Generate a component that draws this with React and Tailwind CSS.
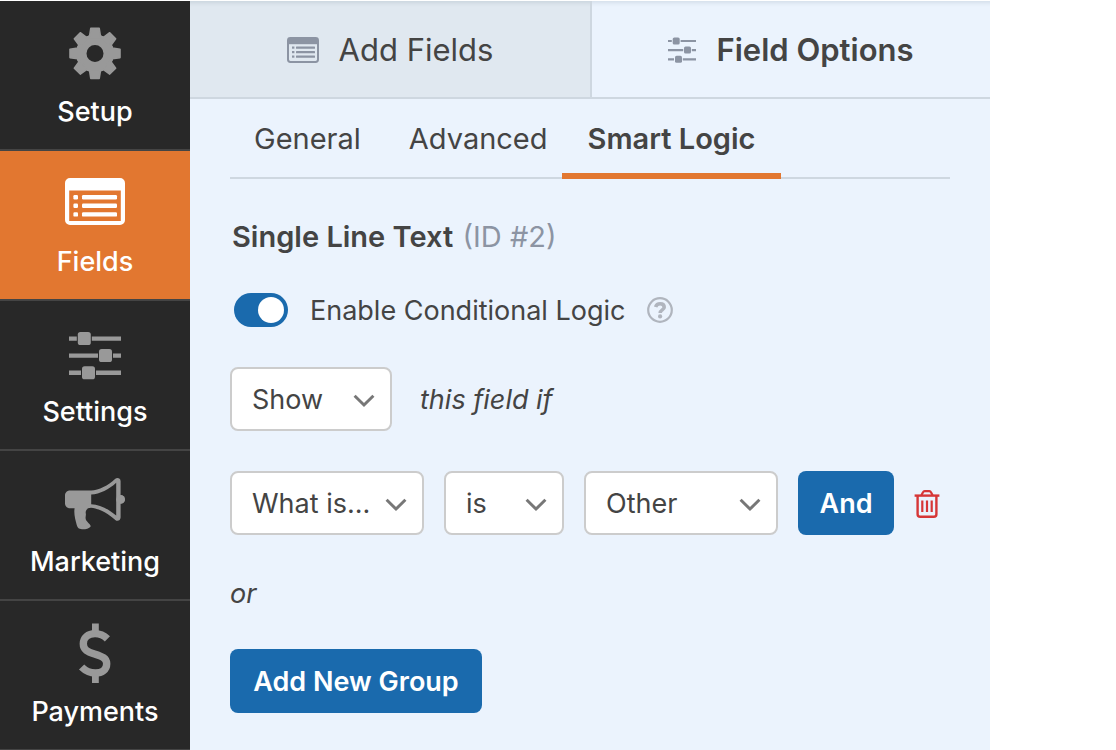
import React, { useState } from "react";

function GearIcon() {
  return (
    <svg viewBox="0 0 60 60" className="size-[60px]" aria-hidden="true">
      <circle cx="30" cy="30.4" r="13.7" fill="none" stroke="currentColor" strokeWidth="10.4" />
      {[0, 45, 90, 135, 180, 225, 270, 315].map((angle) => (
        <path
          key={angle}
          transform={`rotate(${angle} 30 30.4)`}
          d="M25.8 5.4 H34.2 L35.4 13 L38 14.4 H22 L24.6 13 Z"
          fill="currentColor"
          stroke="currentColor"
          strokeWidth="1.6"
          strokeLinejoin="round"
        />
      ))}
    </svg>
  );
}

function FormIcon() {
  return (
    <svg viewBox="0 0 60 60" className="size-[60px]" aria-hidden="true" fill="currentColor">
      <path
        fillRule="evenodd"
        d="M5 5H55A5 5 0 0 1 60 10V47A5 5 0 0 1 55 52H5A5 5 0 0 1 0 47V10A5 5 0 0 1 5 5ZM4.2 17.6V48H55.8V17.6Z"
      />
      {[22, 30.6, 39.2].map((y) => (
        <g key={y}>
          <rect x="8.4" y={y} width="4.6" height="4.4" rx="1.2" />
          <rect x="17" y={y} width="35" height="4.4" rx="1.2" />
        </g>
      ))}
    </svg>
  );
}

function SlidersIcon() {
  return (
    <svg viewBox="0 0 60 60" className="size-[60px]" aria-hidden="true" fill="currentColor">
      <path d="M4 13.4H11.8V17.8H4ZM26.8 13.4H56V17.8H26.8Z" />
      <rect x="12.8" y="9" width="13" height="13" rx="2.6" />
      <path d="M4 30.4H33V34.8H4ZM48 30.4H56V34.8H48Z" />
      <rect x="34" y="26.1" width="13" height="13" rx="2.6" />
      <path d="M4 47.6H16V52H4ZM31 47.6H56V52H31Z" />
      <rect x="17" y="43.3" width="13" height="13" rx="2.6" />
    </svg>
  );
}

function MegaphoneIcon() {
  return (
    <svg viewBox="0 0 60 60" className="size-[60px]" aria-hidden="true" fill="currentColor">
      <path
        fillRule="evenodd"
        d="M5 17.6H26C34 17.4 43 12.5 50.3 5.8C52.2 4.1 55.6 5.2 55.6 8.2V22.2A4.2 4.2 0 0 1 55.6 30.6V44.6C55.6 47.6 52.2 48.8 50.3 47C44 41 34 35.4 26 34.8C22 34.8 20.2 37.6 20.8 40.6C21.2 42.4 20.4 43.4 20.6 45.2C20.8 48.4 24.6 50 25.8 53.2C24 56 20 56.3 17 56.2C13.6 56.1 12.4 54.8 11.6 51.6C10.4 46.6 8.6 41 9.6 35.2H5C2 35.2 0 33 0 30.2V22.6C0 19.8 2 17.6 5 17.6ZM26.2 21.6V31.2C35 31.6 44 36.4 51.2 42.6V9.8C44 16.4 35 21 26.2 21.6Z"
      />
      <circle cx="55.6" cy="26.4" r="4.4" />
    </svg>
  );
}

function DollarIcon() {
  return (
    <svg viewBox="0 0 60 60" className="size-[60px]" aria-hidden="true" fill="none" stroke="currentColor">
      <path
        strokeWidth="7.4"
        d="M42.4 15.8C38.5 12 34.5 10.6 30 10.6C23 10.6 18.3 14.8 18.3 20.8C18.3 26.8 22.5 28.8 29.5 31C37 33.4 41.7 35 41.7 40.7C41.7 46.6 37 50 30.5 50C25 50 20.6 48 16.6 44"
      />
      <path strokeWidth="6.8" d="M30.4 0.4V9M30.4 52V60" />
    </svg>
  );
}

function SmallFormIcon() {
  return (
    <svg viewBox="0 0 32 26" className="h-[26px] w-8 text-[#8c94a3]" aria-hidden="true">
      <rect x="1" y="1" width="30" height="24" rx="2.4" fill="none" stroke="currentColor" strokeWidth="2" />
      <path d="M1 2H31V7.2H1Z" fill="currentColor" />
      {[10.5, 15, 19.5].map((y) => (
        <g key={y} fill="currentColor">
          <rect x="5" y={y - 1} width="2.4" height="2.2" />
          <rect x="9" y={y - 1} width="19" height="2.2" rx="0.5" />
        </g>
      ))}
    </svg>
  );
}

function SmallSlidersIcon() {
  return (
    <svg viewBox="0 0 28 26" className="h-[26px] w-7 text-[#8c94a3]" aria-hidden="true" fill="currentColor">
      <path d="M0 2.9H3.8V5.1H0ZM12.6 2.9H28V5.1H12.6Z" />
      <rect x="4.7" y="0.5" width="7" height="7" rx="1.6" />
      <path d="M0 12H15.2V14.2H0ZM23.8 12H28V14.2H23.8Z" />
      <rect x="16" y="9.6" width="7" height="7" rx="1.6" />
      <path d="M0 21.2H6V23.4H0ZM14.8 21.2H28V23.4H14.8Z" />
      <rect x="7" y="18.8" width="7" height="7" rx="1.6" />
    </svg>
  );
}

function HelpIcon() {
  return (
    <svg viewBox="0 0 26 26" className="size-[26px] text-[#b0b5be]" aria-hidden="true" fill="none" stroke="currentColor">
      <circle cx="13" cy="13" r="11.8" strokeWidth="2.2" />
      <path d="M8.6 10C9.4 7.6 10.9 6.8 13.1 6.8C15.4 6.8 17.2 8 17.2 10.2C17.2 13 13.2 12.8 13.2 16" strokeWidth="3.6" />
      <circle cx="13.1" cy="19.4" r="2.1" fill="currentColor" stroke="none" />
    </svg>
  );
}

function TrashIcon() {
  return (
    <svg viewBox="0 0 26 28" className="h-7 w-[26px]" aria-hidden="true" fill="none" stroke="currentColor" strokeWidth="2.2">
      <path d="M0.6 5.6H25.4" strokeWidth="2.4" />
      <path d="M7.4 5.2L9 2.2C9.4 1.4 9.8 1.2 10.6 1.2H15.4C16.2 1.2 16.6 1.4 17 2.2L18.6 5.2" />
      <path d="M3.6 6V24.2C3.6 26 4.6 26.8 6.2 26.8H19.8C21.4 26.8 22.4 26 22.4 24.2V6" strokeWidth="2.4" />
      <path d="M8.3 10.4V22M13 10.4V22M17.7 10.4V22" />
    </svg>
  );
}

const navItems = [
  { label: "Setup", Icon: GearIcon },
  { label: "Fields", Icon: FormIcon, active: true },
  { label: "Settings", Icon: SlidersIcon },
  { label: "Marketing", Icon: MegaphoneIcon },
  { label: "Payments", Icon: DollarIcon },
];

function Sidebar() {
  return (
    <nav className="w-[190px] shrink-0 bg-[#282828]">
      {navItems.map(({ label, Icon, active }) => (
        <a
          key={label}
          href={`#${label.toLowerCase()}`}
          aria-current={active ? "page" : undefined}
          className={`flex h-[150px] flex-col items-center gap-[10px] border-b-2 border-[#444444] pt-[22px] last:h-[149px] last:border-b ${
            active ? "bg-[#e27730] text-white" : "text-[#999999]"
          }`}
        >
          <Icon />
          <span className="text-[27px] leading-[38px] font-medium text-white">{label}</span>
        </a>
      ))}
    </nav>
  );
}

function Select({ label, options, className }) {
  return (
    <div className={`relative ${className}`}>
      <select
        aria-label={label}
        className="h-16 w-full appearance-none rounded-lg border-2 border-[#cccccc] bg-white pt-[2px] pr-10 pl-5 text-[27px] text-[#444444]"
      >
        {options.map((option) => (
          <option key={option}>{option}</option>
        ))}
      </select>
      <svg
        viewBox="0 0 22 14"
        className="pointer-events-none absolute top-[27px] right-[17px] h-[14px] w-[22px] text-[#777777]"
        aria-hidden="true"
      >
        <path d="M1.6 1.8L11 11L20.4 1.8" fill="none" stroke="currentColor" strokeWidth="3" />
      </svg>
    </div>
  );
}

function PanelTabs() {
  return (
    <div
      role="tablist"
      className="grid h-[98px] grid-cols-[201fr_199fr] border-b-2 border-[#ced7e0] text-[31px] shadow-[inset_0_6px_4px_-4px_rgba(0,40,60,0.1)]"
    >
      <button
        role="tab"
        aria-selected="false"
        className="flex items-center justify-center gap-5 border-r-2 border-[#ced7e0] bg-[#e0e8f0] pt-[2px] shadow-[inset_0_6px_4px_-4px_rgba(0,40,60,0.1)]"
      >
        <SmallFormIcon />
        Add Fields
      </button>
      <button
        role="tab"
        aria-selected="true"
        className="flex items-center justify-center gap-5 pt-[2px] font-semibold"
      >
        <SmallSlidersIcon />
        Field Options
      </button>
    </div>
  );
}

function OptionTabs() {
  return (
    <div role="tablist" className="flex h-20 border-b-2 border-[#ced7e0] text-[29px]">
      <button role="tab" aria-selected="false" className="px-6 pt-[2px]">
        General
      </button>
      <button role="tab" aria-selected="false" className="pt-[2px] pr-[14px] pl-6">
        Advanced
      </button>
      <button role="tab" aria-selected="true" className="relative px-[26px] pt-[2px] font-semibold">
        Smart Logic
        <span className="absolute inset-x-0 -bottom-[2px] h-[6px] bg-[#e27730]" />
      </button>
    </div>
  );
}

export default function App() {
  const [enabled, setEnabled] = useState(true);

  return (
    <div className="min-h-screen bg-white pt-px pr-[126px] font-['Inter',sans-serif] text-[#444444]">
      <div className="flex">
        <Sidebar />
        <main className="min-w-0 flex-1 bg-[#ebf3fd]">
          <PanelTabs />
          <div className="px-10 text-[27px]">
            <OptionTabs />
            <h2 className="mt-10 pl-[2px] text-[29px] leading-9 font-semibold">
              Single Line Text <span className="ml-[2px] font-normal text-[#8c94a3]">(ID #2)</span>
            </h2>

            <div className="mt-[38px] flex h-[34px] items-center gap-[22px] pl-1">
              <input
                id="conditional-logic"
                type="checkbox"
                role="switch"
                checked={enabled}
                onChange={(event) => setEnabled(event.target.checked)}
                className="h-[34px] w-[54px] appearance-none rounded-full bg-[#999999] p-1 before:block before:size-[26px] before:rounded-full before:bg-white checked:bg-[#1a6aad] checked:before:ml-5"
              />
              <label htmlFor="conditional-logic" className="pt-[2px]">
                Enable Conditional Logic
              </label>
              <button aria-label="Help">
                <HelpIcon />
              </button>
            </div>

            <div className="mt-10 flex items-center gap-7">
              <Select label="Action" options={["Show", "Hide"]} className="w-[162px]" />
              <em className="pt-[2px]">this field if</em>
            </div>

            <div className="mt-10 flex items-center gap-5">
              <Select label="Field" options={["What is..."]} className="w-[194px]" />
              <Select label="Operator" options={["is", "is not"]} className="w-[120px]" />
              <Select label="Value" options={["Other"]} className="w-[194px]" />
              <button className="h-16 w-24 rounded-lg bg-[#1a6aad] pt-[2px] font-semibold text-white">And</button>
              <button aria-label="Delete rule" className="pt-[2px] text-[#d63637]">
                <TrashIcon />
              </button>
            </div>

            <p className="mt-10 leading-[38px] italic">or</p>
            <button className="mt-9 h-16 w-[252px] rounded-lg bg-[#1a6aad] pt-[2px] font-semibold text-white">
              Add New Group
            </button>
          </div>
        </main>
      </div>
    </div>
  );
}
